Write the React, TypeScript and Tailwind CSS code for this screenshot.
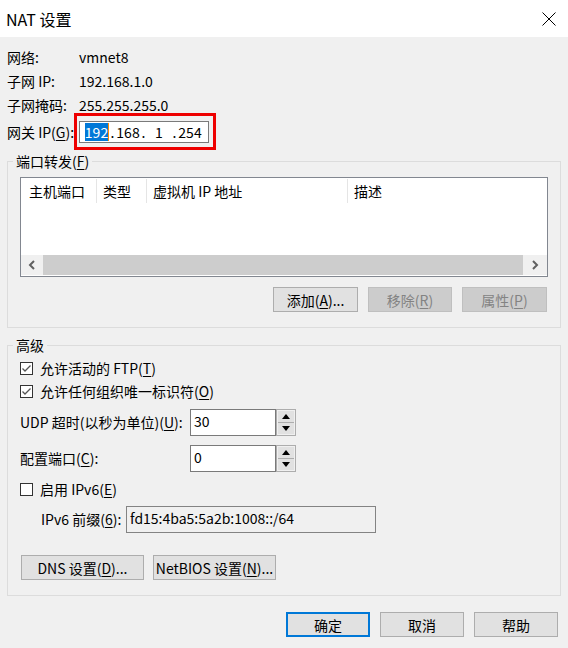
import type { ReactNode } from "react";

const font = "font-['Noto_Sans_CJK_SC','Noto_Sans',sans-serif]";

function Key({ children }: { children: ReactNode }) {
  return <span className="underline underline-offset-[2px]">{children}</span>;
}

function Btn({
  children,
  width,
  disabled,
  primary,
}: {
  children: ReactNode;
  width: string;
  disabled?: boolean;
  primary?: boolean;
}) {
  const base = "flex h-[25px] items-center justify-center text-[14px] leading-[18px]";
  let look = "border border-[#adadad] bg-[#e1e1e1] text-black";
  if (disabled) look = "border border-[#bfbfbf] bg-[#cccccc] text-[#838383]";
  if (primary) look = "border-2 border-[#0078d7] bg-[#e1e1e1] text-black";
  return (
    <button type="button" className={`${base} ${look} ${width}`}>
      {children}
    </button>
  );
}

function CheckBox({ checked, children }: { checked?: boolean; children: ReactNode }) {
  return (
    <label className="flex h-[23px] items-center gap-[7px] text-[14px]">
      <span className="flex h-[13px] w-[13px] items-center justify-center border border-[#333333] bg-white">
        {checked ? (
          <svg width="11" height="11" viewBox="0 0 11 11">
            <polyline points="1.5,5.5 4,8 9.5,2.5" fill="none" stroke="#555" strokeWidth="1.3" />
          </svg>
        ) : null}
      </span>
      <span>{children}</span>
    </label>
  );
}

function Spinner() {
  return (
    <div className="flex h-[27px] w-[20px] flex-col border border-[#adadad] bg-[#f0f0f0] p-[1px]">
      <div className="flex flex-1 items-center justify-center border-b border-[#adadad] bg-[#e1e1e1]">
        <svg width="8" height="5" viewBox="0 0 8 5">
          <polygon points="0,5 8,5 4,0" fill="#000" />
        </svg>
      </div>
      <div className="flex flex-1 items-center justify-center bg-[#e1e1e1]">
        <svg width="8" height="5" viewBox="0 0 8 5">
          <polygon points="0,0 8,0 4,5" fill="#000" />
        </svg>
      </div>
    </div>
  );
}

function NumberField({ value }: { value: string }) {
  return (
    <div className="flex">
      <div className="h-[27px] w-[86px] border border-[#7a7a7a] bg-white px-[3px] pt-[1px] text-[14px] leading-[20px]">
        {value}
      </div>
      <Spinner />
    </div>
  );
}

function Chevron({ dir }: { dir: "left" | "right" }) {
  return (
    <svg width="8" height="10" viewBox="0 0 8 10">
      <polyline
        points={dir === "left" ? "6,1 2,5 6,9" : "2,1 6,5 2,9"}
        fill="none"
        stroke="#606060"
        strokeWidth="2"
      />
    </svg>
  );
}

export default function App() {
  const columns = [
    { label: "主机端口", w: "w-[76px]", pl: "pl-[8px]" },
    { label: "类型", w: "w-[50px]", pl: "pl-[6px]" },
    { label: "虚拟机 IP 地址", w: "w-[201px]", pl: "pl-[6px]" },
    { label: "描述", w: "flex-1", pl: "pl-[6px]" },
  ];

  return (
    <div className={`flex h-[648px] w-[568px] flex-col bg-[#f0f0f0] text-black ${font}`}>
      <div className="flex h-[37px] items-center justify-between bg-white pl-[6px] pr-[12px]">
        <span className="text-[16px]">NAT 设置</span>
        <svg width="14" height="14" viewBox="0 0 14 14">
          <path d="M0.5 0.5 L13.5 13.5 M13.5 0.5 L0.5 13.5" stroke="#000" strokeWidth="1" />
        </svg>
      </div>

      <div className="flex flex-col px-[7px] pt-[8px] text-[14px]">
        <div className="flex h-[24px] items-center">
          <span className="w-[72px]">网络:</span>
          <span>vmnet8</span>
        </div>
        <div className="flex h-[24px] items-center">
          <span className="w-[72px]">子网 IP:</span>
          <span>192.168.1.0</span>
        </div>
        <div className="flex h-[24px] items-center">
          <span className="w-[72px]">子网掩码:</span>
          <span>255.255.255.0</span>
        </div>
        <div className="mt-[4px] flex h-[22px] items-center">
          <span className="w-[72px]">
            网关 IP(<Key>G</Key>):
          </span>
          <div className="relative">
            <div className="flex h-[22px] w-[130px] items-center border border-[#7a7a7a] bg-white pl-[4px] leading-[18px]">
              <span className="flex w-[26px] justify-center">
                <span className="border-r border-[#ff8c00] bg-[#0078d7] text-white">192</span>
              </span>
              <span className="w-[5px] text-center">.</span>
              <span className="w-[26px] text-center">168</span>
              <span className="w-[5px] text-center">.</span>
              <span className="w-[26px] text-center">1</span>
              <span className="w-[5px] text-center">.</span>
              <span className="w-[26px] text-center">254</span>
            </div>
            <div className="pointer-events-none absolute -bottom-[7px] -left-[5px] -right-[7px] -top-[8px] border-[3px] border-[#ee0000]" />
          </div>
        </div>

        <fieldset className="mt-[10px] border border-[#dcdcdc]">
          <legend className="ml-[5px] px-[3px] leading-[16px]">
            端口转发(<Key>F</Key>)
          </legend>
          <div className="flex flex-col px-[12px] pb-[15px] pt-[8px]">
            <div className="flex h-[100px] flex-col border border-[#828790] bg-white">
              <div className="flex h-[25px] pt-[1px]">
                {columns.map((c, i) => (
                  <div
                    key={c.label}
                    className={`flex items-center ${c.w} ${c.pl} ${
                      i < 3 ? "border-r border-[#e5e5e5]" : ""
                    }`}
                  >
                    {c.label}
                  </div>
                ))}
              </div>
              <div className="flex-1" />
              <div className="mb-[1px] flex h-[20px]">
                <div className="flex w-[22px] items-center justify-center bg-[#f0f0f0]">
                  <Chevron dir="left" />
                </div>
                <div className="flex-1 bg-[#cdcdcd]" />
                <div className="flex w-[24px] items-center justify-center bg-[#f0f0f0]">
                  <Chevron dir="right" />
                </div>
              </div>
            </div>
            <div className="mt-[10px] flex justify-end gap-[10px] pr-[1px]">
              <Btn width="w-[85px]">
                添加(<Key>A</Key>)...
              </Btn>
              <Btn width="w-[84px]" disabled>
                移除(<Key>R</Key>)
              </Btn>
              <Btn width="w-[85px]" disabled>
                属性(<Key>P</Key>)
              </Btn>
            </div>
          </div>
        </fieldset>

        <fieldset className="mt-[9px] border border-[#dcdcdc]">
          <legend className="ml-[5px] px-[3px] leading-[16px]">高级</legend>
          <div className="flex flex-col pl-[12px] pb-[15px] pt-[4px]">
            <CheckBox checked>
              允许活动的 FTP(<Key>T</Key>)
            </CheckBox>
            <CheckBox checked>
              允许任何组织唯一标识符(<Key>O</Key>)
            </CheckBox>
            <div className="mt-[6px] flex items-center">
              <span className="w-[170px]">
                UDP 超时(以秒为单位)(<Key>U</Key>):
              </span>
              <NumberField value="30" />
            </div>
            <div className="mt-[9px] flex items-center">
              <span className="w-[170px]">
                配置端口(<Key>C</Key>):
              </span>
              <NumberField value="0" />
            </div>
            <div className="mt-[6px]">
              <CheckBox>
                启用 IPv6(<Key>E</Key>)
              </CheckBox>
            </div>
            <div className="mt-[5px] flex items-center pl-[21px]">
              <span className="w-[85px]">
                IPv6 前缀(<Key>6</Key>):
              </span>
              <div className="h-[27px] w-[250px] border border-[#838383] bg-[#f0f0f0] px-[3px] pt-[1px] leading-[20px]">
                fd15:4ba5:5a2b:1008::/64
              </div>
            </div>
            <div className="mt-[22px] flex gap-[9px] pl-[1px]">
              <Btn width="w-[123px]">
                DNS 设置(<Key>D</Key>)...
              </Btn>
              <Btn width="w-[123px]">
                NetBIOS 设置(<Key>N</Key>)...
              </Btn>
            </div>
          </div>
        </fieldset>

        <div className="mt-[16px] flex justify-end gap-[10px] pr-[3px]">
          <Btn width="w-[84px]" primary>
            确定
          </Btn>
          <Btn width="w-[84px]">取消</Btn>
          <Btn width="w-[84px]">帮助</Btn>
        </div>
      </div>
    </div>
  );
}
